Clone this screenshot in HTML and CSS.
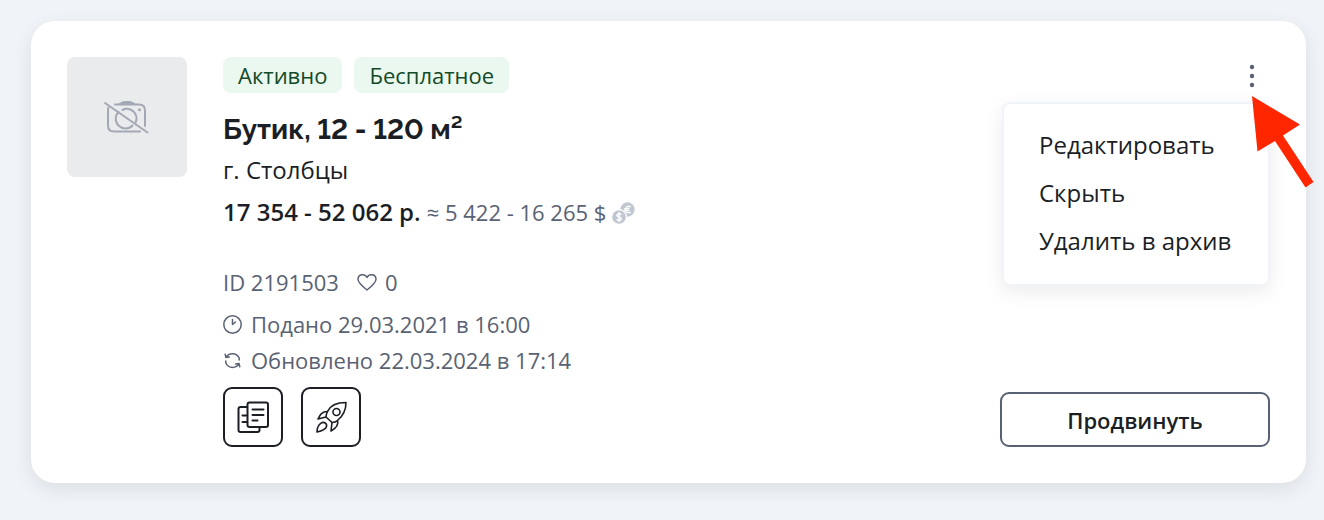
FILE: index.html
```html
<!DOCTYPE html>
<html lang="ru">
<head>
<meta charset="utf-8">
<meta name="viewport" content="width=device-width, initial-scale=1">
<title>Бутик, 12 - 120 м²</title>
<link rel="stylesheet" href="styles.css">
</head>
<body>
<article class="card">
  <div class="photo">
    <svg width="48" height="36" viewBox="0 0 48 36" fill="none" stroke="#a3a9b4" stroke-width="2" stroke-linecap="round" role="img" aria-label="Нет фото">
      <path d="M5.500 8.500Q5 9.500 5 11V26.500q0 6 6 6h26M12 5.500h24q6 0 6 6V27"/>
      <path d="M15.500 13a9.500 9.500 0 1 0 14 13.500M19.500 11a9.500 9.500 0 0 1 13 12.500"/>
      <path d="M2 4l42.500 29.500"/>
      <path d="M15 5.500q3-3.500 7-3.500h4q4 0 7 3.500z" fill="#a3a9b4" stroke="none"/>
      <circle cx="36.500" cy="10.800" r="1.500" fill="#a3a9b4" stroke="none"/>
    </svg>
  </div>
  <div class="info">
    <div class="tags"><span class="tag">Активно</span><span class="tag">Бесплатное</span></div>
    <h2 class="title">Бутик, 12 - 120 м²</h2>
    <p class="city">г. Столбцы</p>
    <p class="price"><strong class="price-main">17 354 - 52 062 р.</strong><span class="price-alt">≈ 5 422 - 16 265 $</span>
      <svg class="coins" width="24" height="24" viewBox="0 0 24 24" aria-hidden="true">
        <circle cx="15.500" cy="9.500" r="7.200" fill="#c1c7d1"/>
        <circle cx="7" cy="17" r="8" fill="#fff"/>
        <circle cx="7" cy="17" r="6.800" fill="#c1c7d1"/>
        <g fill="none" stroke="#fff" stroke-width="1.400"><path d="M18.800 6.800c-2.500-1.500-5 0-5 2.700s2.500 4.200 5 2.700M12 8.600h5.500M12 10.400h5.500"/><path d="M9.400 14.700c-1.500-1.500-4.600-1-4.600.6 0 2.200 4.600 1.200 4.600 3.200 0 2-3.300 2.300-4.800.7M7 12v10"/></g>
      </svg>
    </p>
    <div class="stats">
      <span>ID 2191503</span>
      <span class="likes"><svg width="20" height="20" viewBox="0 0 20 20" fill="none" stroke="#596273" stroke-width="1.500" stroke-linejoin="round" aria-hidden="true"><path d="M10 18C5.500 14.500 1 11 1 7.300 1 2 7.800 1.300 10 5.500c2.200-4.200 9-3.500 9 1.800 0 3.700-4.500 7.200-9 10.700z"/></svg>0</span>
    </div>
    <p class="date"><svg width="20" height="20" viewBox="0 0 20 20" fill="none" stroke="#596273" stroke-width="1.500" stroke-linecap="round" stroke-linejoin="round" aria-hidden="true"><circle cx="9.500" cy="10.500" r="8.700"/><path d="M9.500 5.500v5l3-2.500"/></svg>Подано 29.03.2021 в 16:00</p>
    <p class="date"><svg width="20" height="20" viewBox="0 0 20 20" fill="none" stroke="#596273" stroke-width="1.500" stroke-linecap="round" stroke-linejoin="round" aria-hidden="true"><path d="M3 7.500C5.500 2.500 13.500 2 16.200 8v2M2.200 4.300l.8 3.200 3.300-.6M16 13.500C13.500 18.500 5.500 19 2.800 13v-2M16.800 16.700l-.8-3.200-3.300.6"/></svg>Обновлено 22.03.2024 в 17:14</p>
    <div class="tools">
      <button class="tool" type="button" aria-label="Копировать">
        <svg width="34" height="34" viewBox="0 0 34 34" fill="none" stroke="#1b1f25" stroke-width="2" stroke-linecap="round" stroke-linejoin="round"><path d="M11 7H4.500q-2 0-2 2V30q0 2 2 2h17q2 0 2-2v-2.500M6.500 15.500h4M6.500 22h4"/><rect x="11.500" y="2.500" width="20.500" height="24.500" rx="2"/><path d="M16.500 9.500h11M16.500 15h11M16.500 20.500h5"/></svg>
      </button>
      <button class="tool" type="button" aria-label="Поднять">
        <svg width="34" height="34" viewBox="0 0 34 34" fill="none" stroke="#1b1f25" stroke-width="1.600" stroke-linecap="round" stroke-linejoin="round"><path d="M32 2.500C22.500 2.500 16 6 13.500 11.500c-1.300 2.500-1.500 4-1.500 5.500l6 5.500c2 0 4-.5 5.500-2C29 16 32 10 32 2.500z"/><circle cx="22.500" cy="12" r="3.500"/><path d="M13.500 11.500c-5.500 0-7.500 3-9.500 7.500l8-2M23.500 20.500c1.500 4.500-2 8-6.500 10.500l1-8.500M3 32c0-4 1.500-7 4-8.800 3-2 6.300.3 5.500 3.300-1 3.500-5 4.500-9.500 5.500z"/></svg>
      </button>
    </div>
  </div>
  <div class="actions">
    <div class="more">
      <button class="dots" type="button" aria-label="Меню" aria-expanded="true">
        <svg width="6" height="26" viewBox="0 0 6 26" fill="#596273"><circle cx="3" cy="4" r="2.200"/><circle cx="3" cy="13" r="2.200"/><circle cx="3" cy="22" r="2.200"/></svg>
      </button>
      <div class="menu">
        <button class="item" type="button">Редактировать</button>
        <button class="item" type="button">Скрыть</button>
        <button class="item" type="button">Удалить в архив</button>
      </div>
      <svg class="pointer" width="64" height="92" viewBox="0 0 64 92" fill="#ff2600" aria-hidden="true"><path d="M1 0l48 28.500-17 11 30.500 46.500-8 5.500L24 45 6.500 55.500z"/></svg>
    </div>
    <button class="promote" type="button">Продвинуть</button>
  </div>
</article>
</body>
</html>
```
FILE: styles.css
```css
* { box-sizing: border-box; }
body {
  margin: 0;
  padding: 21px 18px 37px 31px;
  background: #f0f4f8;
  color: #1b1f25;
  font: 24px/36px "Open Sans", "Noto Sans", sans-serif;
}
h2, p { margin: 0; }
button { font: inherit; color: inherit; cursor: pointer; }
svg { display: block; flex: none; }
.card {
  display: flex;
  gap: 36px;
  padding: 36px;
  background: #fff;
  border-radius: 24px;
  box-shadow: 0 6px 20px rgba(0, 0, 0, .09);
}
.photo {
  display: flex;
  align-items: center;
  justify-content: center;
  flex: none;
  width: 120px;
  height: 120px;
  border-radius: 8px;
  background: #e9ebed;
}
.info { flex: 1; min-width: 0; }
.tags { display: flex; gap: 12px; }
.tag {
  padding: 0 15px;
  border-radius: 8px;
  background: #eaf8ef;
  color: #134a27;
  font-size: 22px;
}
.title {
  margin-top: 19px;
  font: 700 28px/36px Raleway, Lato, "Noto Sans", sans-serif;
  font-variant-numeric: lining-nums;
}
.city { margin-top: 4px; }
.price { display: flex; align-items: center; gap: 6px; margin-top: 6px; }
.price-main { font-weight: 600; }
.price-alt { color: #596273; font-size: 22px; }
.stats {
  display: flex;
  gap: 18px;
  margin: 34px 0 6px;
  color: #596273;
  font-size: 22px;
}
.likes { display: flex; align-items: center; gap: 8px; }
.date {
  display: flex;
  align-items: center;
  gap: 8px;
  color: #596273;
  font-size: 22px;
}
.tools { display: flex; gap: 18px; margin-top: 9px; }
.tool {
  display: flex;
  align-items: center;
  justify-content: center;
  width: 60px;
  height: 60px;
  padding: 0;
  border: 2px solid #1b1f25;
  border-radius: 9px;
  background: #fff;
}
.actions {
  display: flex;
  flex-direction: column;
  justify-content: space-between;
  flex: none;
  width: 270px;
}
.more { position: relative; display: flex; justify-content: flex-end; }
.dots {
  display: flex;
  align-items: center;
  justify-content: center;
  width: 36px;
  height: 38px;
  padding: 0;
  border: 0;
  background: none;
}
.menu {
  position: absolute;
  top: 45px;
  right: 0;
  display: flex;
  flex-direction: column;
  gap: 12px;
  width: 268px;
  padding: 23px 0 25px;
  border: 2px solid #f0f4f8;
  border-radius: 8px;
  background: #fff;
  box-shadow: 0 6px 20px rgba(0, 0, 0, .08);
}
.item {
  padding: 0 35px;
  border: 0;
  background: none;
  text-align: left;
  white-space: nowrap;
}
.pointer { position: absolute; top: 39px; right: -45px; }
.promote {
  height: 55px;
  padding: 0 12px;
  border: 2px solid #596273;
  border-radius: 9px;
  background: #fff;
  font-size: 22px;
  font-weight: 600;
}
```
